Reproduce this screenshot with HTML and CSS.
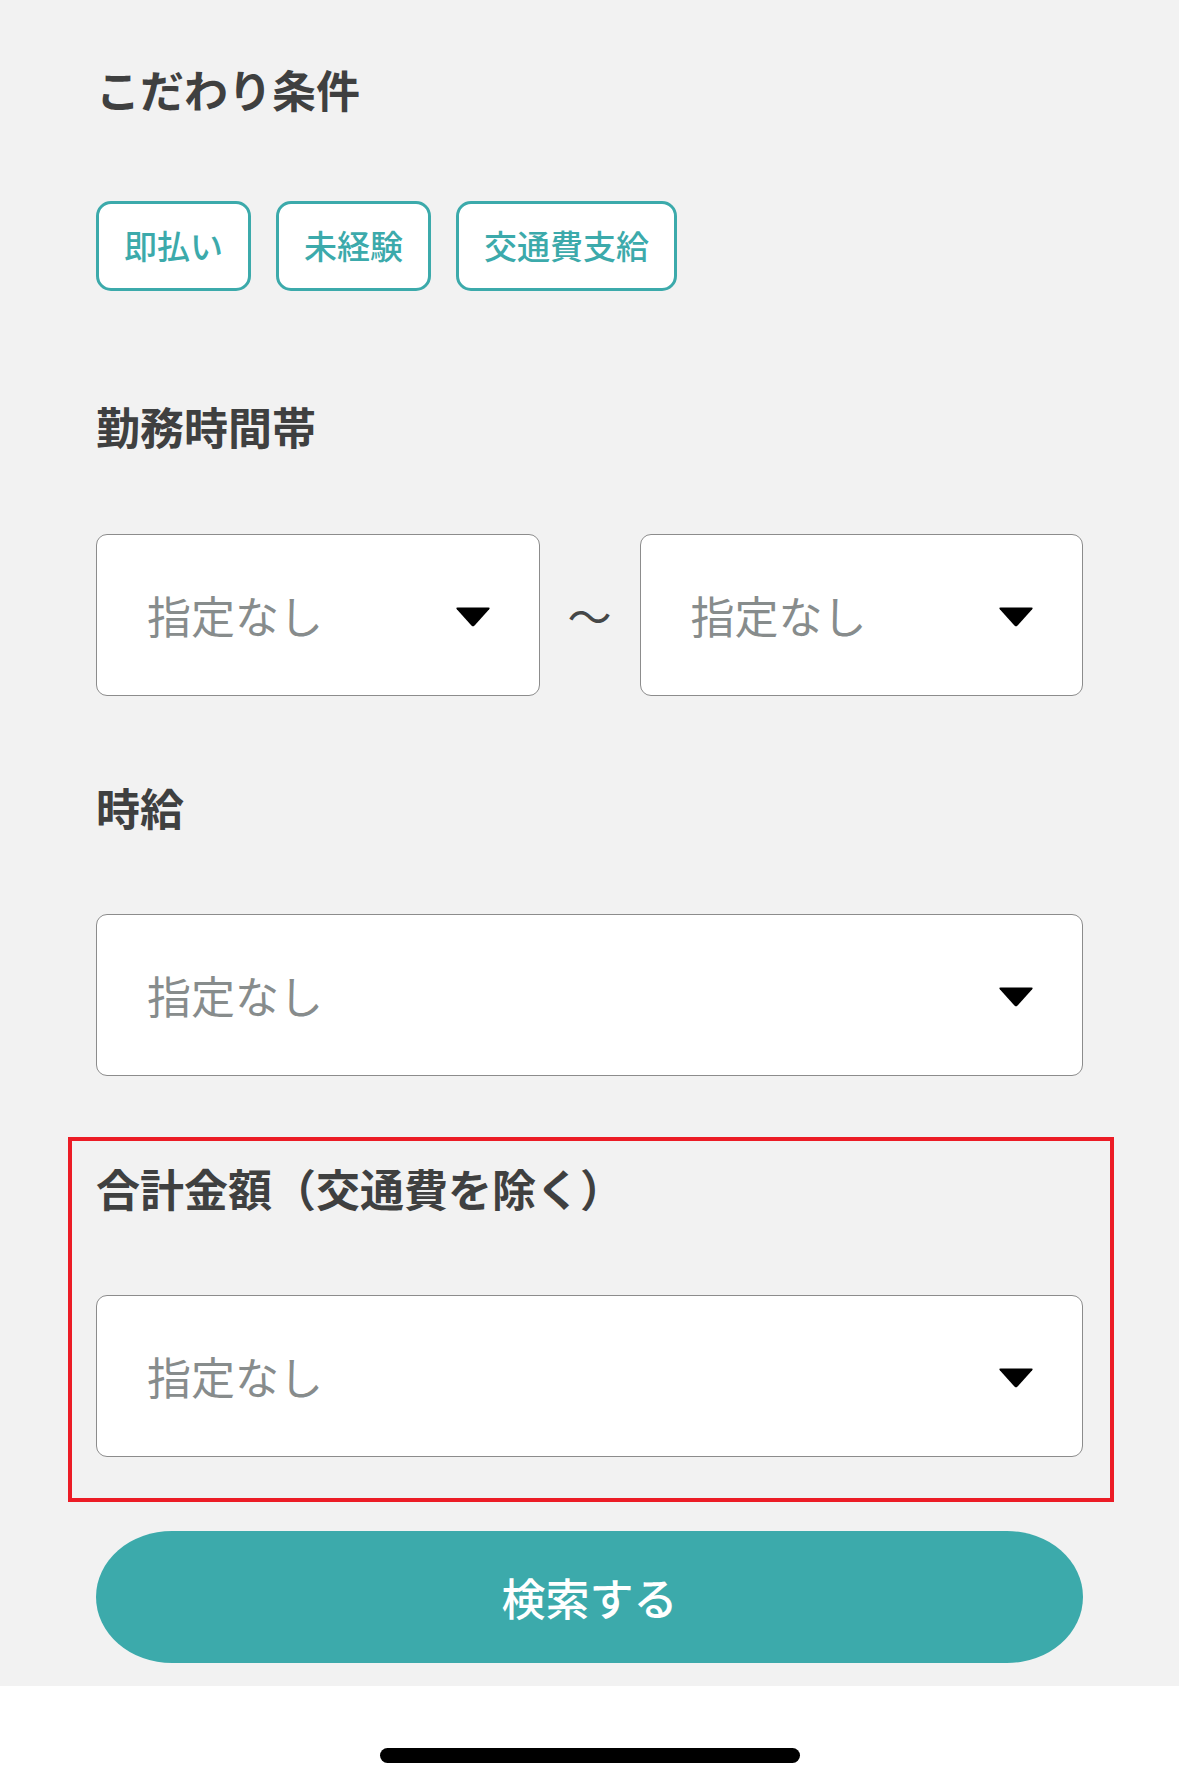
FILE: index.html
```html
<!DOCTYPE html>
<html lang="ja">
<head>
<meta charset="utf-8">
<title>こだわり条件</title>
<link rel="stylesheet" href="styles.css">
</head>
<body>
<main class="page">
  <h2 class="heading heading-first">こだわり条件</h2>
  <div class="chips">
    <span class="chip">即払い</span>
    <span class="chip">未経験</span>
    <span class="chip">交通費支給</span>
  </div>

  <h2 class="heading heading-time">勤務時間帯</h2>
  <div class="range">
    <div class="select">
      <span class="placeholder">指定なし</span>
      <svg class="arrow" viewBox="0 0 36 20" width="36" height="20" aria-hidden="true"><path d="M2.5 0.5 H33.5 Q35.5 0.5 34.2 2.2 L19.6 18.6 Q18 20.2 16.4 18.6 L1.8 2.2 Q0.5 0.5 2.5 0.5 Z" fill="#000"/></svg>
    </div>
    <span class="tilde">～</span>
    <div class="select">
      <span class="placeholder">指定なし</span>
      <svg class="arrow" viewBox="0 0 36 20" width="36" height="20" aria-hidden="true"><path d="M2.5 0.5 H33.5 Q35.5 0.5 34.2 2.2 L19.6 18.6 Q18 20.2 16.4 18.6 L1.8 2.2 Q0.5 0.5 2.5 0.5 Z" fill="#000"/></svg>
    </div>
  </div>

  <h2 class="heading heading-wage">時給</h2>
  <div class="select select-wide">
    <span class="placeholder">指定なし</span>
    <svg class="arrow" viewBox="0 0 36 20" width="36" height="20" aria-hidden="true"><path d="M2.5 0.5 H33.5 Q35.5 0.5 34.2 2.2 L19.6 18.6 Q18 20.2 16.4 18.6 L1.8 2.2 Q0.5 0.5 2.5 0.5 Z" fill="#000"/></svg>
  </div>

  <section class="highlight">
    <h2 class="heading heading-total">合計金額（交通費を除く）</h2>
    <div class="select select-wide select-total">
      <span class="placeholder">指定なし</span>
      <svg class="arrow" viewBox="0 0 36 20" width="36" height="20" aria-hidden="true"><path d="M2.5 0.5 H33.5 Q35.5 0.5 34.2 2.2 L19.6 18.6 Q18 20.2 16.4 18.6 L1.8 2.2 Q0.5 0.5 2.5 0.5 Z" fill="#000"/></svg>
    </div>
  </section>

  <button class="search" type="button">検索する</button>
</main>
<footer class="home">
  <div class="home-bar"></div>
</footer>
</body>
</html>
```

FILE: styles.css
```css
html, body {
  margin: 0;
  padding: 0;
}

body {
  width: 1179px;
  height: 1788px;
  background: #ffffff;
  font-family: "Noto Sans CJK JP", "Noto Sans", sans-serif;
  overflow: hidden;
}

.page {
  background: #f2f2f2;
  height: 1686px;
  box-sizing: border-box;
  padding: 0 96px;
  display: flow-root;
}

.heading {
  margin: 0;
  font-size: 44px;
  line-height: 44px;
  font-weight: 700;
  color: #3f4040;
  letter-spacing: 0;
}

.heading-first {
  margin-top: 67px;
}

.chips {
  display: flex;
  gap: 25px;
  margin-top: 90px;
}

.chip {
  display: block;
  box-sizing: border-box;
  height: 90px;
  padding: 0 25px;
  border: 3px solid #3caaab;
  border-radius: 15px;
  background: #ffffff;
  color: #3caaab;
  font-size: 33px;
  line-height: 82px;
  font-weight: 500;
}

.heading-time {
  margin-top: 113px;
}

.range {
  display: grid;
  grid-template-columns: 1fr 100px 1fr;
  align-items: center;
  margin-top: 86px;
}

.select {
  box-sizing: border-box;
  height: 162px;
  background: #ffffff;
  border: 1px solid #8c8c8c;
  border-radius: 11px;
  display: flex;
  align-items: center;
  justify-content: space-between;
  padding: 0 48px 0 50px;
}

.placeholder {
  font-size: 44px;
  line-height: 1;
  color: #878c8c;
  font-weight: 400;
}

.arrow {
  display: block;
  width: 36px;
  height: 20px;
  margin-top: 4px;
}

.tilde {
  text-align: center;
  font-size: 44px;
  line-height: 1;
  color: #454747;
}

.heading-wage {
  margin-top: 89px;
}

.select-wide {
  margin-top: 85px;
}

.highlight {
  margin: 61px -31px 0 -28px;
  border: 4px solid #ec1c26;
  padding: 25px 27px 41px 24px;
}

.select-total {
  margin-top: 85px;
}

.search {
  display: block;
  width: 100%;
  height: 132px;
  margin: 29px 0 0;
  border: none;
  border-radius: 76px / 66px;
  background: #3caaab;
  color: #ffffff;
  font-family: "Noto Sans CJK JP", "Noto Sans", sans-serif;
  font-size: 44px;
  font-weight: 500;
  line-height: 1;
  padding: 0;
}

.home {
  height: 102px;
  background: #ffffff;
  display: flow-root;
}

.home-bar {
  width: 420px;
  height: 15px;
  margin: 62px auto 0;
  background: #000000;
  border-radius: 8px;
}
```
